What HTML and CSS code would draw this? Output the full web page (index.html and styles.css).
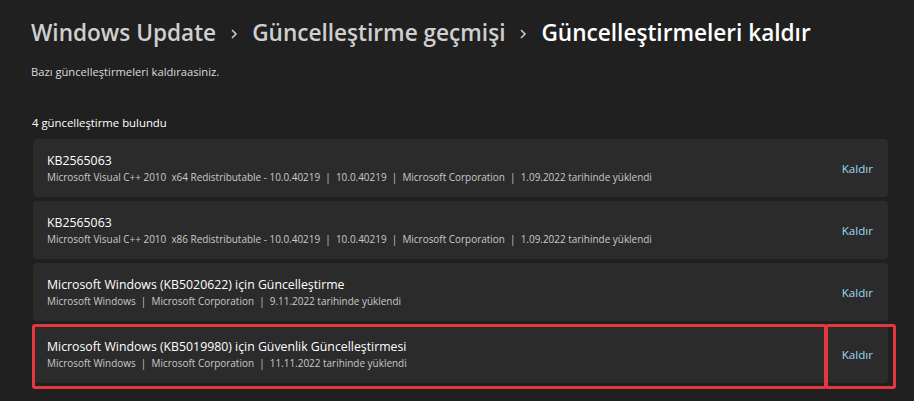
FILE: index.html
```html
<!DOCTYPE html>
<html lang="tr">
<head>
<meta charset="utf-8">
<link rel="stylesheet" href="styles.css">
</head>
<body>
<div class="page">
  <h1 class="crumbs">
    <span class="crumb">Windows Update</span>
    <svg class="chev" width="10" height="12" viewBox="0 0 10 12"><path d="M3 2 L7 6 L3 10" fill="none" stroke="#c8c8c8" stroke-width="1.6"/></svg>
    <span class="crumb">Güncelleştirme geçmişi</span>
    <svg class="chev" width="10" height="12" viewBox="0 0 10 12"><path d="M3 2 L7 6 L3 10" fill="none" stroke="#c8c8c8" stroke-width="1.6"/></svg>
    <span class="crumb current">Güncelleştirmeleri kaldır</span>
  </h1>
  <p class="desc">Bazı güncelleştirmeleri kaldıraasiniz.</p>
  <p class="count">4 güncelleştirme bulundu</p>
  <div class="list">
    <div class="card">
      <div class="info">
        <div class="name">KB2565063</div>
        <div class="meta">Microsoft Visual C++ 2010&nbsp; x64 Redistributable - 10.0.40219 &nbsp;|&nbsp; 10.0.40219 &nbsp;|&nbsp; Microsoft Corporation &nbsp;|&nbsp; 1.09.2022 tarihinde yüklendi</div>
      </div>
      <a class="remove">Kaldır</a>
    </div>
    <div class="card">
      <div class="info">
        <div class="name">KB2565063</div>
        <div class="meta">Microsoft Visual C++ 2010&nbsp; x86 Redistributable - 10.0.40219 &nbsp;|&nbsp; 10.0.40219 &nbsp;|&nbsp; Microsoft Corporation &nbsp;|&nbsp; 1.09.2022 tarihinde yüklendi</div>
      </div>
      <a class="remove">Kaldır</a>
    </div>
    <div class="card">
      <div class="info">
        <div class="name">Microsoft Windows (KB5020622) için Güncelleştirme</div>
        <div class="meta">Microsoft Windows &nbsp;|&nbsp; Microsoft Corporation &nbsp;|&nbsp; 9.11.2022 tarihinde yüklendi</div>
      </div>
      <a class="remove">Kaldır</a>
    </div>
    <div class="card marked">
      <div class="info">
        <div class="name">Microsoft Windows (KB5019980) için Güvenlik Güncelleştirmesi</div>
        <div class="meta">Microsoft Windows &nbsp;|&nbsp; Microsoft Corporation &nbsp;|&nbsp; 11.11.2022 tarihinde yüklendi</div>
      </div>
      <a class="remove">Kaldır</a>
      <div class="mark mark-main"></div>
      <div class="mark mark-btn"></div>
    </div>
  </div>
</div>
</body>
</html>
```
FILE: styles.css
```css
html, body {
  margin: 0;
  padding: 0;
  background: #202020;
  width: 914px;
  height: 401px;
  overflow: hidden;
}
.page {
  font-family: "Open Sans", "Noto Sans", sans-serif;
  color: #ffffff;
  padding: 15px 0 0 31px;
}
.crumbs {
  display: flex;
  align-items: center;
  margin: 0;
  font-size: 22.6px;
  font-weight: 600;
  line-height: 36px;
  white-space: nowrap;
}
.crumb {
  color: #cfcfcf;
}
.crumb.current {
  color: #ffffff;
}
.chev {
  margin: 2px 13px 0 13px;
}
.desc {
  margin: 13px 0 0 0;
  font-size: 11.2px;
  line-height: 16px;
  color: #dcdcdc;
}
.count {
  margin: 35px 0 0 1px;
  font-size: 11.35px;
  line-height: 16px;
  color: #ffffff;
}
.list {
  margin: 8px 0 0 2px;
  width: 855px;
  display: flex;
  flex-direction: column;
  gap: 4px;
}
.card {
  position: relative;
  height: 58px;
  background: #2b2b2b;
  border-radius: 4px;
  display: flex;
  align-items: center;
  justify-content: space-between;
  padding: 0 15px 0 14px;
}
.info {
  display: flex;
  flex-direction: column;
  gap: 0;
  padding-top: 1px;
}
.name {
  font-size: 12.3px;
  line-height: 16px;
  color: #ffffff;
}
.meta {
  font-size: 9.95px;
  line-height: 16px;
  color: #c9c9c9;
  white-space: pre;
}
.remove {
  font-size: 11.6px;
  color: #9bdcf0;
}
.mark {
  position: absolute;
  border: 3px solid #e5383e;
  border-radius: 3px;
  box-sizing: border-box;
}
.mark-main {
  left: -1px;
  top: -1px;
  width: 795px;
  height: 65px;
}
.mark-btn {
  left: 792px;
  top: -1px;
  width: 71px;
  height: 65px;
}
```
